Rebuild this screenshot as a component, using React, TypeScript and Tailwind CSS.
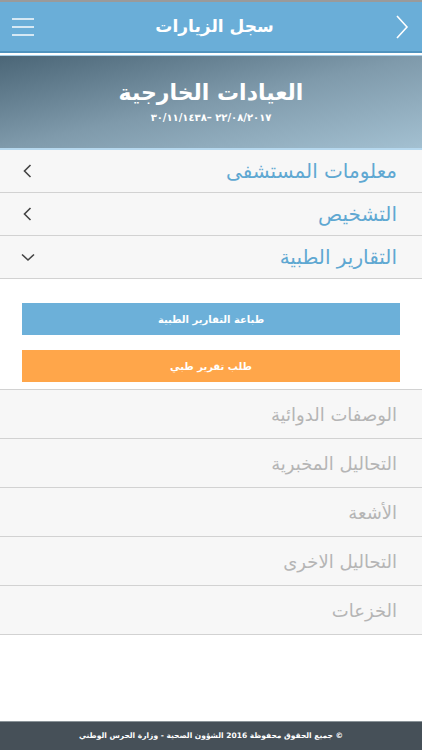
import React from 'react';

const Chevron: React.FC<{ down?: boolean }> = ({ down }) => (
  <svg width="16" height="16" viewBox="0 0 16 16" className="text-[#444]">
    {down ? (
      <path d="M2 5.5 L8 11 L14 5.5" fill="none" stroke="currentColor" strokeWidth="1.6" />
    ) : (
      <path d="M10.5 2 L4.5 8 L10.5 14" fill="none" stroke="currentColor" strokeWidth="1.6" />
    )}
  </svg>
);

const App: React.FC = () => {
  const openRows = ['معلومات المستشفى', 'التشخيص'];
  const grayRows = ['الوصفات الدوائية', 'التحاليل المخبرية', 'الأشعة', 'التحاليل الاخرى', 'الخزعات'];

  return (
    <div dir="rtl" className="h-[750px] w-[422px] flex flex-col bg-white font-['DejaVu_Sans',sans-serif] overflow-hidden">
      {/* top bar */}
      <div className="h-[2px] bg-[#9a9a9a]" />
      <header className="h-[49px] bg-[#6aaed8] flex items-center justify-between pr-[13px] pl-[12px]">
        <svg width="14" height="26" viewBox="0 0 14 26" className="text-white">
          <path d="M2 2 L12 13 L2 24" fill="none" stroke="currentColor" strokeWidth="1.6" />
        </svg>
        <h1 className="text-white text-[17px] font-bold">سجل الزيارات</h1>
        <div className="flex flex-col gap-[6px] w-[22px]">
          <span className="h-[2px] bg-[#d5e8f4]" />
          <span className="h-[2px] bg-[#d5e8f4]" />
          <span className="h-[2px] bg-[#d5e8f4]" />
        </div>
      </header>
      <div className="h-[2px] bg-[#4f93be]" />
      <div className="h-[2px] bg-white" />
      <div className="h-[1px] bg-[#a9d0e8]" />

      {/* banner */}
      <section className="h-[92px] bg-gradient-to-br from-[#4b6677] via-[#7f9aab] to-[#a3c0d1] flex flex-col items-center justify-center">
        <h2 className="text-white text-[22px] font-bold leading-tight">العيادات الخارجية</h2>
        <p className="text-white text-[10px] font-bold mt-[4px]">
          <bdo dir="ltr">٣٠/١١/١٤٣٨– ٢٢/٠٨/٢٠١٧</bdo>
        </p>
      </section>
      <div className="h-[2px] bg-[#b6d8ee]" />

      {/* accordion */}
      {openRows.map((t) => (
        <div key={t} className="h-[43px] bg-[#f7f7f7] border-b border-[#d2d2d2] flex items-center justify-between pr-[25px] pl-[20px]">
          <span className="text-[#5fa8d2] text-[20px] font-medium">{t}</span>
          <Chevron />
        </div>
      ))}
      <div className="h-[43px] bg-[#f7f7f7] border-b border-[#d2d2d2] flex items-center justify-between pr-[25px] pl-[20px]">
        <span className="text-[#5fa8d2] text-[20px] font-medium">التقارير الطبية</span>
        <Chevron down />
      </div>

      <div className="bg-white px-[22px] pt-[24px] pb-[7px] flex flex-col gap-[15px]">
        <button className="h-[32px] bg-[#6cb0d9] text-white text-[10px] font-bold">طباعة التقارير الطبية</button>
        <button className="h-[32px] bg-[#ffa64a] text-white text-[10px] font-bold">طلب تقرير طبي</button>
      </div>
      <div className="h-[1px] bg-[#d2d2d2]" />

      {grayRows.map((t) => (
        <div key={t} className="h-[49px] bg-[#f7f7f7] border-b border-[#d2d2d2] flex items-center pr-[25px]">
          <span className="text-[#b5b5b5] text-[18px]">{t}</span>
        </div>
      ))}

      <footer className="mt-auto h-[29px] bg-[#465058] border-t border-[#8a9398] flex items-center justify-center">
        <p className="text-white text-[7.5px] font-bold">© جميع الحقوق محفوظة 2016 الشؤون الصحية - وزارة الحرس الوطني</p>
      </footer>
    </div>
  );
};

export default App;
